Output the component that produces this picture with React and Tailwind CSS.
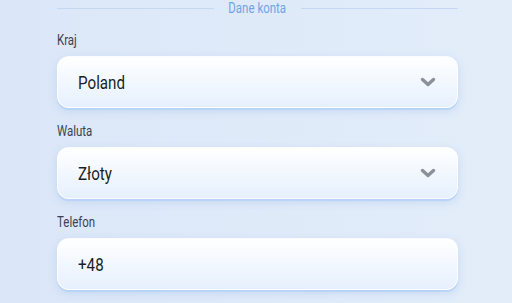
const Chevron = () => (
  <svg width="16" height="10" viewBox="0 0 16 10" className="text-[#8b9099]">
    <path d="M2.5 2.5 L8 7.5 L13.5 2.5" fill="none" stroke="currentColor" strokeWidth="3.4" strokeLinecap="round" strokeLinejoin="round" />
  </svg>
)

const Narrow = ({ children, className = "" }) => (
  <span className={`inline-block origin-left scale-x-[0.82] whitespace-nowrap ${className}`}>{children}</span>
)

const Field = ({ label, value, select }) => (
  <div>
    <div className="h-5 text-[14px] leading-5 text-[#3a4250]">
      <Narrow>{label}</Narrow>
    </div>
    <div className="mt-[6px] h-[52px] rounded-xl border border-white/80 bg-gradient-to-b from-white to-[#e6f0fd] shadow-[0_2px_0_#b8d4f6,0_3px_8px_rgba(120,160,220,0.25)] flex items-center justify-between pl-5 pr-[21px]">
      <Narrow className="mt-[3px] text-[18.5px] text-[#1a1e25]">{value}</Narrow>
      {select && <Chevron />}
    </div>
  </div>
)

export default function App() {
  return (
    <div className="w-[512px] h-[303px] overflow-hidden bg-gradient-to-r from-[#dbe7f8] to-[#e3edfa] font-['Roboto',sans-serif]">
      <div className="ml-[57px] mr-[54px]">
        <div className="flex items-center h-4">
          <div className="flex-1 h-px bg-[#c5d8f1]" />
          <span className="w-[87px] text-center text-[14px] text-[#6fa3e6] leading-4">
            <span className="inline-block scale-x-[0.82] whitespace-nowrap">Dane konta</span>
          </span>
          <div className="flex-1 h-px bg-[#c5d8f1]" />
        </div>
        <div className="mt-[14px] flex flex-col gap-[13px]">
          <Field label="Kraj" value="Poland" select />
          <Field label="Waluta" value="Złoty" select />
          <Field label="Telefon" value="+48" />
        </div>
      </div>
    </div>
  )
}
